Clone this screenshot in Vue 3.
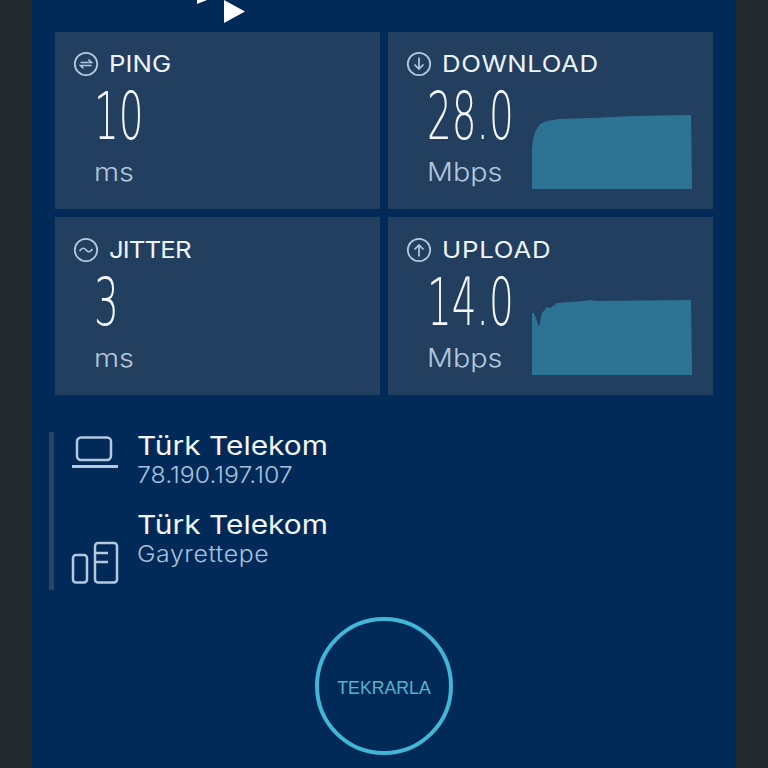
<script setup>
const cards = [
  { id: 'ping', label: 'PING', value: '10', unit: 'ms' },
  { id: 'down', label: 'DOWNLOAD', value: '28.0', unit: 'Mbps', path: 'M0 74V35L1 24L4 15L8 9L15 6L27 4L60 3L100 1L159 0L160 74Z' },
  { id: 'jitter', label: 'JITTER', value: '3', unit: 'ms' },
  { id: 'up', label: 'UPLOAD', value: '14.0', unit: 'Mbps', path: 'M0 75V13L2 13L7 27L10 13L15 7L18 8L25 3L52 1L59 0L65 1L159 0L160 75Z' }
]
</script>

<template>
  <main class="phone">
    <section class="panel">
      <div class="top">
        <svg class="marks" width="60" height="32" viewBox="0 0 60 32">
          <path d="M10 0H20L10 4Z" fill="#fff" />
          <path d="M37 0L58 11.5L37 23Z" fill="#fff" />
        </svg>
      </div>
      <div class="grid">
        <article v-for="c in cards" :key="c.id" class="card" :class="c.id">
          <div class="head">
            <svg class="cicon" width="26" height="26" viewBox="0 0 26 26" fill="none" stroke="#b4c8de">
              <circle cx="13" cy="13" r="11.2" stroke-width="1.8" />
              <template v-if="c.id === 'ping'">
                <path d="M7.5 11.5H18.5L15.5 8.5M18.5 14.5H7.5L10.5 17.5" stroke-width="1.6" />
              </template>
              <template v-else-if="c.id === 'down'">
                <path d="M13 6.5V18M8.5 13.5L13 18L17.5 13.5" stroke-width="1.7" />
              </template>
              <template v-else-if="c.id === 'up'">
                <path d="M13 19.5V8M8.5 12.5L13 8L17.5 12.5" stroke-width="1.7" />
              </template>
              <template v-else>
                <path d="M6.5 14C9 10.5 11 10.5 13 13C15 15.5 17 15.5 19.5 12" stroke-width="1.6" />
              </template>
            </svg>
            <span class="label">{{ c.label }}</span>
          </div>
          <div class="body">
            <div class="readout">
              <div class="value"><span>{{ c.value }}</span></div>
              <div class="unit">{{ c.unit }}</div>
            </div>
            <svg v-if="c.path" class="chart" width="160" height="75" viewBox="0 0 160 75">
              <path :d="c.path" fill="#2d7393" />
            </svg>
          </div>
        </article>
      </div>

      <div class="servers">
        <div class="rail"></div>
        <div class="rows">
          <div class="row">
            <svg class="ricon" width="48" height="36" viewBox="0 0 48 36" fill="none" stroke="#b4c8de" stroke-width="2.5">
              <rect x="6" y="1.5" width="34" height="22.5" rx="4" />
              <path d="M1 30.5H47" stroke-width="3" />
            </svg>
            <div class="text">
              <div class="name">Türk Telekom</div>
              <div class="sub ip">78.190.197.107</div>
            </div>
          </div>
          <div class="row second">
            <svg class="ricon" width="48" height="44" viewBox="0 0 48 44" fill="none" stroke="#b4c8de" stroke-width="2.5">
              <rect x="2" y="14" width="14" height="27.5" rx="3" />
              <rect x="24" y="2" width="22" height="39.5" rx="3" />
              <path d="M24 12H37M24 21H37" />
            </svg>
            <div class="text">
              <div class="name">Türk Telekom</div>
              <div class="sub place">Gayrettepe</div>
            </div>
          </div>
        </div>
      </div>

      <div class="again">
        <button class="go">TEKRARLA</button>
      </div>
    </section>
  </main>
</template>

<style>
html, body { margin: 0; background: #23282f; }
</style>

<style scoped>
.phone {
  width: 768px;
  height: 768px;
  overflow: hidden;
  background: #23282f;
  padding: 0 32px;
  box-sizing: border-box;
}
.panel {
  width: 704px;
  height: 768px;
  background: #012a58;
  font-family: "Inter", "Liberation Sans", sans-serif;
}
.top {
  height: 32px;
  padding-left: 155px;
}
.marks { display: block; }
.grid {
  display: grid;
  grid-template-columns: 325px 325px;
  grid-template-rows: 177px 178px;
  gap: 8px;
  padding: 0 23px;
}
.card {
  background: #223f60;
  padding: 19px 20px 0;
  box-sizing: border-box;
}
.jitter, .up { padding-top: 20px; }
.up .chart { margin-top: 37px; }
.head {
  display: flex;
  align-items: center;
  gap: 10px;
  height: 26px;
  margin-left: -2px;
}
.label {
  display: inline-block;
  font-size: 23px;
  font-weight: 400;
  color: #eef4fa;
  white-space: nowrap;
  transform: scaleX(1.12);
  transform-origin: 0 50%;
}
.ping .label { letter-spacing: 0.1px; }
.down .label { letter-spacing: 0.5px; }
.jitter .label { letter-spacing: -0.8px; }
.up .label { letter-spacing: 0.7px; }
.body {
  display: flex;
  align-items: flex-start;
  padding-left: 19px;
}
.readout { width: 105px; flex: none; }
.value {
  height: 76px;
  color: #f4f8fc;
  font-family: "DejaVu Sans", sans-serif;
  font-weight: 200;
  font-size: 66px;
  line-height: 80px;
}
.value span {
  display: inline-block;
  transform: scaleX(0.59);
  transform-origin: 0 50%;
  white-space: nowrap;
}
.unit {
  margin-top: 4px;
  font-size: 25px;
  font-weight: 300;
  line-height: 30px;
  color: #b4c8de;
  transform: scaleX(1.15);
  transform-origin: 0 50%;
}
.chart {
  display: block;
  margin-top: 38px;
  flex: none;
}
.servers {
  display: flex;
  margin: 37px 0 0 17px;
}
.rail {
  width: 5px;
  height: 158px;
  background: #264568;
  flex: none;
}
.rows { padding-left: 17px; }
.row {
  display: flex;
  gap: 18px;
  height: 79px;
}
.ricon { flex: none; margin-top: 4px; display: block; }
.second .ricon { margin-top: 30px; }
.name {
  font-size: 26px;
  line-height: 30px;
  font-weight: 400;
  color: #f2f6fa;
  margin-top: -1px;
  transform: scaleX(1.15);
  transform-origin: 0 50%;
}
.sub {
  font-size: 23px;
  font-weight: 300;
  line-height: 27px;
  margin-top: 1px;
  color: #a9c1dc;
  transform: scaleX(1.08);
  transform-origin: 0 50%;
}
.place { letter-spacing: 0.55px; }
.again {
  display: flex;
  justify-content: center;
  margin-top: 27px;
}
.go {
  width: 138px;
  height: 138px;
  border-radius: 50%;
  border: 4px solid #43b6d6;
  background: transparent;
  color: #55b4d2;
  font-family: "Liberation Sans", sans-serif;
  font-size: 17.7px;
  padding: 5px 0 0;
}
</style>
